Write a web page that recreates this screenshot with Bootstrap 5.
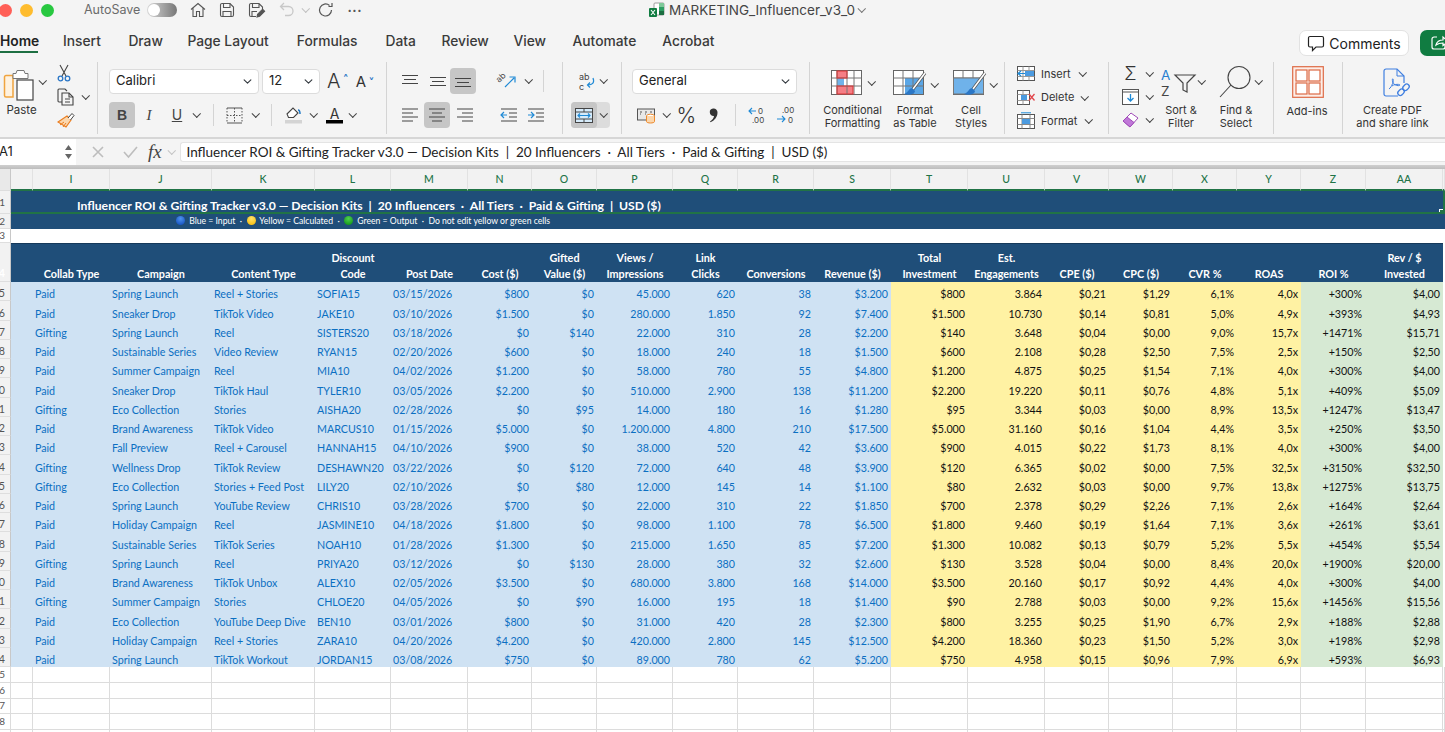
<!DOCTYPE html>
<html lang="en">
<head>
<meta charset="UTF-8">
<meta name="viewport" content="width=device-width, initial-scale=1.0">
<title>MARKETING_Influencer_v3_0</title>
<link href="https://cdn.jsdelivr.net/npm/bootstrap@5.3.0/dist/css/bootstrap.min.css" rel="stylesheet">
<style>
html, body { overflow: hidden; }
body { width: 1445px; height: 732px; background: #fff; font-family: Inter, "Liberation Sans", sans-serif; color: #333; }
svg { display: block; flex: none; overflow: visible; }
svg text { font-family: Inter, "Liberation Sans", sans-serif; }

.chrome { background: #f4f4f4; }
.title-bar { height: 20px; position: relative; }
.light { width: 13px; height: 13px; border-radius: 50%; flex: none; }
.autosave { font-size: 12.5px; color: #6b6b6b; margin-left: 30px; width: 63px; }
.toggle { width: 30px; height: 14px; border-radius: 7px; background: linear-gradient(90deg, #d8d8d8, #777); padding: 1px; flex: none; }
.toggle span { display: block; width: 12px; height: 12px; border-radius: 50%; background: #fff; }
.doc-name { font-size: 13.5px; color: #444; margin-left: 4px; }

.tab-bar { height: 40px; padding-bottom: 2px; }
.tab-item { font-size: 13.8px; color: #3a3a3a; font-weight: 500; height: 33px; padding-top: 11px; line-height: 20px; text-decoration: none; flex: none; }
.tab-item.on { border-bottom: 2.5px solid #1d6f42; color: #222; font-weight: 600; }
.btn-comments { width: 110px; height: 26px; background: #fff; border: 1px solid #e2e2e2; border-radius: 7px; font-size: 14px; color: #222; font-weight: 400; padding: 0; }
.btn-comments:hover { background: #fff; }
.btn-share { width: 25px; height: 26px; background: #107c41; border-radius: 7px 0 0 7px; border: 0; padding: 0 0 0 11px; overflow: hidden; }

.ribbon { height: 77px; }
.rb-group { height: 72px; flex: none; margin-top: 2px; border-right: 1px solid #d4d4d4; position: relative; }
.rb-row { height: 26px; }
.tool-label { font-size: 11px; line-height: 13px; color: #333; text-align: center; white-space: nowrap; }
.tool-name { font-size: 11px; color: #333; }
.chev { display: inline-block; flex: none; width: 5.5px; height: 5.5px; border-right: 1.4px solid #444; border-bottom: 1.4px solid #444; transform: rotate(45deg) translate(-1px,-1px); }
.vsep { width: 1px; height: 22px; background: #d4d4d4; flex: none; }
.btn-tool { width: 26px; height: 26px; padding: 0; border: 0; border-radius: 4px; background: transparent; display: flex; align-items: center; justify-content: center; flex: none; color: #444; font-size: 14px; line-height: 1; }
.btn-tool.on { background: #c6c6c6; }
.rb-select { height: 25px; padding: 0 14px 0 6px; font-size: 13px; color: #222; border: 1px solid #dcdcdc; border-radius: 4px; background-position: right 5px center; background-size: 11px 9px; box-shadow: none; }
.w-font { width: 150px; }
.w-size { width: 58px; }
.w-format { width: 165px; }
.g-clip { width: 98px; }
.g-font { width: 289px; padding: 6px 0 0 11px; }
.g-align { width: 176px; padding: 6px 0 0 11px; }
.g-merge { width: 59px; padding: 6px 0 0 8px; }
.g-num { width: 188px; padding: 6px 0 0 10px; }
.g-styles { width: 195px; padding: 8px 0 0 12px; }
.g-cells { width: 104px; padding: 0 0 0 12px; }
.g-edit { width: 165px; padding: 3px 0 0 13px; }
.g-addin { width: 69px; }
.g-pdf { width: 103px; border-right: 0; }
.cell-cmd { height: 23.5px; }

.formula-bar { height: 28px; border-top: 2px solid #d6d6d6; }
.name-box { width: 77px; height: 26px; background: #fff; font-size: 13px; color: #222; padding-left: 0; flex: none; margin-left: -1px; }
.fx-label { font-family: "Liberation Serif", serif; font-style: italic; font-size: 19px; color: #444; width: 18px; line-height: 20px; }
.formula-text { height: 20px; flex: 1; background: #fff; border: 1px solid #e4e4e4; border-right: 0; border-radius: 3px 0 0 3px; font-family: Lato, "Liberation Sans", sans-serif; font-size: 13.5px; line-height: 18px; color: #222; padding-left: 6px; margin-left: 5px; white-space: nowrap; overflow: hidden; }
.pane-band { height: 4px; background: linear-gradient(#cfcfcf, #bdbdbd); }

.sheet-grid { table-layout: fixed; border-collapse: separate; border-spacing: 0; width: 1445px; font-family: Lato, "Liberation Sans", sans-serif; font-size: 11px; }
.sheet-grid td, .sheet-grid th { padding: 0; overflow: hidden; white-space: nowrap; }
.col-row th { height: 22px; background: #f2f2f2; border-right: 1px solid #e2e2e2; border-bottom: 2px solid #217346; text-align: center; color: #217346; font-size: 10.5px; font-weight: 500; padding-top: 2px; }
.sheet-grid th.col-corner { border-bottom: 1px solid #ddd; border-right: 1px solid #c8c8c8; background: #e9e9e9; }
.row-num { background: #f2f2f2; border-right: 1px solid #c8c8c8; border-bottom: 1px solid #dedede; font-size: 10px; line-height: 11px; color: #555; direction: rtl; padding-right: 6px !important; }
.title-cell { height: 23px; background: #1f4e79; color: #fff; font-weight: 700; font-size: 12.2px; padding-left: 66px !important; vertical-align: bottom; line-height: 12px; border-right: 2px solid #217346; border-bottom: 2px solid #217346; position: relative; }
.sel-handle { position: absolute; right: -1px; bottom: -2px; width: 5px; height: 5px; background: #217346; border: 1px solid #fff; }
.legend-cell { height: 15px; background: #1f4e79; color: #fff; font-size: 8.65px; padding-left: 165px !important; line-height: 14px; vertical-align: top; }
.dot { display: inline-block; width: 9px; height: 9px; border-radius: 50%; margin: 0 2px 0 0; vertical-align: -1px; }
.dot-blue { background: radial-gradient(circle at 50% 30%, #4f93ee, #0a46b8); }
.dot-yellow { background: radial-gradient(circle at 50% 30%, #ffe26a, #f3b800); }
.dot-green { background: radial-gradient(circle at 50% 30%, #4fd04f, #078a0f); }
.gap-row td { height: 14px; background: #fff; }
.head-row td { height: 39px; background: #1f4e79; color: #fff; font-weight: 700; font-size: 10.8px; line-height: 16px; text-align: center; vertical-align: bottom; border-top: 1px solid #16395a; }
.data-row td { height: 19.25px; font-size: 10.7px; line-height: 14px; vertical-align: bottom; }
.c-in { background: #cfe2f3; color: #0b6fc2; }
.c-calc { background: #fff2a3; color: #111; }
.c-out { background: #d6e9d3; color: #111; }
.pad-l { padding-left: 2px !important; }
.pad-r { text-align: right; padding-right: 3px !important; }
.c-out.pad-r.roi { padding-right: 4px !important; }
.empty-row td { height: 15.8px; background: #fff; border-right: 1px solid #dcdcdc; border-bottom: 1px solid #dcdcdc; }
</style>
</head>

<body>

<div class="chrome">
    <!-- window title row -->
    <div class="title-bar d-flex align-items-center">
        <span class="light" style="background:#ff5f57;margin-left:-1px"></span>
        <span class="light ms-2" style="background:#febc2e"></span>
        <span class="light ms-2" style="background:#28c840"></span>
        <span class="autosave">AutoSave</span>
        <span class="toggle"><span></span></span>
        <svg style="margin-left:13px" width="16" height="16" viewBox="0 0 16 16" fill="none" stroke="#555" stroke-width="1.1"><path d="M1 7.5 8 1.5l7 6M3 6v8.5h3.5v-5h3v5H13V6"/></svg>
        <svg style="margin-left:13px" width="16" height="16" viewBox="0 0 16 16" fill="none" stroke="#555" stroke-width="1.1"><path d="M1.5 3a1.5 1.5 0 0 1 1.5-1.500h8l3.500 3.500v8a1.500 1.500 0 0 1-1.500 1.500H3a1.500 1.500 0 0 1-1.500-1.500z"/><path d="M4.500 1.500v4h6.500v-4M4 14.500v-5h8v5"/></svg>
        <svg style="margin-left:13px" width="17" height="16" viewBox="0 0 17 16" fill="none" stroke="#555" stroke-width="1.1"><path d="M8 14.500H3A1.500 1.500 0 0 1 1.500 13V3A1.500 1.500 0 0 1 3 1.500h8L14.500 5v2M4.500 1.500v4H11v-4M4 14.500v-5h5"/><path d="m9 15 .6-2.800 5-5 2 2-5 5z" fill="#555"/></svg>
        <svg style="margin-left:14px" width="16" height="16" viewBox="0 0 16 16" fill="none" stroke="#c8c8c8" stroke-width="1.300"><path d="M5 1 1.500 4.500 5 8M1.500 4.500h8a4.500 4.500 0 0 1 0 9H6"/></svg>
        <span class="chev" style="margin-left:8px;border-color:#c0c0c0"></span>
        <svg style="margin-left:9px" width="16" height="16" viewBox="0 0 16 16" fill="none" stroke="#555" stroke-width="1.200"><path d="M13.500 8a6 6 0 1 1-2-4.500M14 1v3.500h-3.500"/></svg>
        <span style="margin-left:14px;font-size:13px;font-weight:700;letter-spacing:.5px;color:#555;line-height:16px;height:16px">···</span>
        <svg style="margin-left:287px" width="16" height="16" viewBox="0 0 16 16"><rect x="5" y="1" width="10" height="12" rx="1" fill="#fff" stroke="#888" stroke-width=".8"/><rect x="10" y="1" width="5" height="4" fill="#7fc99a"/><rect x="10" y="5" width="5" height="4" fill="#2e9e63"/><rect x="10" y="9" width="5" height="4" fill="#1b6e41"/><rect x="0" y="6" width="8" height="9" rx="1" fill="#107c41"/><path d="m2 8 4 5M6 8l-4 5" stroke="#fff" stroke-width="1.100"/></svg>
        <span class="doc-name">MARKETING_Influencer_v3_0</span>
        <span class="chev ms-1" style="border-color:#777"></span>
    </div>

    <!-- tabs -->
    <div class="tab-bar d-flex align-items-start">
        <a class="tab-item on" style="width:38px">Home</a>
        <a class="tab-item" style="margin-left:25px">Insert</a>
        <a class="tab-item" style="margin-left:27.500px">Draw</a>
        <a class="tab-item" style="margin-left:24.500px">Page Layout</a>
        <a class="tab-item" style="margin-left:28px">Formulas</a>
        <a class="tab-item" style="margin-left:28px">Data</a>
        <a class="tab-item" style="margin-left:25.500px">Review</a>
        <a class="tab-item" style="margin-left:24.700px">View</a>
        <a class="tab-item" style="margin-left:26.500px">Automate</a>
        <a class="tab-item" style="margin-left:26px">Acrobat</a>
        <div class="ms-auto d-flex" style="margin-top:10px;gap:11px">
            <button class="btn btn-comments d-flex align-items-center justify-content-center gap-1">
                <svg width="18" height="17" viewBox="0 0 18 17" fill="none" stroke="#222" stroke-width="1.200"><path d="M3 1.500h12A1.500 1.500 0 0 1 16.500 3v7.500A1.500 1.500 0 0 1 15 12H9l-3.500 3.500V12H3a1.500 1.500 0 0 1-1.500-1.500V3A1.500 1.500 0 0 1 3 1.500z"/></svg>
                Comments
            </button>
            <button class="btn btn-share d-flex align-items-center">
                <svg width="18" height="16" viewBox="0 0 18 16" fill="none" stroke="#fff" stroke-width="1.200"><path d="M6 2H3a2 2 0 0 0-2 2v8a2 2 0 0 0 2 2h9a2 2 0 0 0 2-2v-2M5 10c1-4 4-5 7-5V2l5 4.500-5 4V8c-3 0-5 .5-7 2z"/></svg>
            </button>
        </div>
    </div>

    <!-- ribbon -->
    <div class="ribbon d-flex">
        <!-- clipboard -->
        <div class="rb-group g-clip d-flex">
            <div style="width:37px;margin-left:3px;padding-top:5px">
                <svg width="31" height="33" viewBox="0 0 31 33" fill="none"><path d="M3 8.500h7V30H3a1.500 1.500 0 0 1-1.500-1.500V10A1.500 1.500 0 0 1 3 8.500z" fill="#fff2df" stroke="#f0a43f" stroke-width="1.500"/><path d="M10 6.500h3l1-3h7l1 3h3v5H10z" fill="#fff" stroke="#777"/><rect x="14" y="13" width="16" height="20" fill="#fff" stroke="#444" stroke-width="1.200"/></svg>
                <div class="tool-label" style="margin-top:4px;width:37px;font-size:11.5px">Paste</div>
            </div>
            <span class="chev" style="margin-top:17px"></span>
            <div class="d-flex flex-column align-items-start" style="margin-left:11px;padding-top:2px;gap:6px">
                <svg width="14" height="18" viewBox="0 0 14 18" fill="none"><path d="M3 1 9 12M11 1 5 12" stroke="#444" stroke-width="1.100"/><circle cx="3.500" cy="14.500" r="2.300" stroke="#2a76c6" stroke-width="1.300"/><circle cx="10.500" cy="14.500" r="2.300" stroke="#2a76c6" stroke-width="1.300"/></svg>
                <div class="d-flex align-items-center gap-2">
                    <svg width="18" height="18" viewBox="0 0 18 18" fill="none" stroke="#444" stroke-width="1.100"><path d="M5 14H2a1 1 0 0 1-1-1V2a1 1 0 0 1 1-1h6l2 2"/><path d="M5 5h7l4 4v8H5z" fill="#f4f4f4"/><path d="M12 5v4h4M8 11h5M8 14h5"/></svg>
                    <span class="chev"></span>
                </div>
                <svg width="18" height="17" viewBox="0 0 18 17" fill="none"><path d="M10 4 14 8 9 15 1 10z" fill="#fbd7ae" stroke="#ea7d1f" stroke-width="1.100"/><path d="M3 13l4-3M6 15l3-4" stroke="#ea7d1f"/><path d="m11 6 4-4.500 2 2L13.500 8" fill="#fff" stroke="#444"/></svg>
            </div>
        </div>

        <!-- font -->
        <div class="rb-group g-font">
            <div class="rb-row d-flex align-items-center" style="gap:3px">
                <select class="form-select rb-select w-font"><option>Calibri</option></select>
                <select class="form-select rb-select w-size"><option>12</option></select>
                <span style="margin-left:4px;font-size:20px;line-height:1;font-weight:300;color:#333">A</span><span style="font-size:9px;color:#2a76c6;font-weight:700;margin:-8px 0 0 0">^</span>
                <span style="margin-left:5px;font-size:15px;line-height:1;color:#333">A</span><span style="font-size:9px;color:#2a76c6;font-weight:700;margin:-8px 0 0 0;transform:scaleY(-1)">^</span>
            </div>
            <div class="rb-row d-flex align-items-center" style="margin-top:8px">
                <button class="btn-tool on fw-bold" style="font-family:'Liberation Sans',sans-serif">B</button>
                <button class="btn-tool" style="margin-left:1px;font-family:'Liberation Serif',serif;font-style:italic;font-size:15px">I</button>
                <button class="btn-tool" style="font-size:14px;margin-left:2px;text-decoration:underline">U</button>
                <span class="chev" style="margin-left:4px"></span>
                <span class="vsep" style="margin-left:13px"></span>
                <svg style="margin-left:12px" width="17" height="17" viewBox="0 0 17 17" fill="none" stroke="#555"><path d="M1 1h15M1 16h15" stroke-width="1.200"/><path d="M1 1v15M8.500 1v15M16 1v15M1 8.500h15" stroke-dasharray="1.500 1.500"/></svg>
                <span class="chev" style="margin-left:10px"></span>
                <span class="vsep" style="margin-left:13px"></span>
                <svg style="margin-left:13px" width="17" height="18" viewBox="0 0 17 18" fill="none"><path d="m2 8 6-6 5 5-4.500 4.500h-5z" fill="#fff" stroke="#444" stroke-width="1.100"/><path d="M13 4c1.500 0 2 1.500 2 4" stroke="#1976c6" stroke-width="1.500"/><rect y="14" width="17" height="3.500" fill="#d4d4d4"/></svg>
                <span class="chev" style="margin-left:9px"></span>
                <svg style="margin-left:9px" width="17" height="18" viewBox="0 0 17 18"><text x="8.500" y="12.500" font-size="14" text-anchor="middle" fill="#333">A</text><rect y="14" width="17" height="3.500" fill="#000"/></svg>
                <span class="chev" style="margin-left:7px"></span>
            </div>
        </div>

        <!-- alignment -->
        <div class="rb-group g-align">
            <div class="rb-row d-flex align-items-center">
                <svg style="margin-left:4px" width="16" height="12" viewBox="0 0 16 12" stroke="#444"><path d="M0 .5h16M2 4.500h12M0 8.500h16"/></svg>
                <svg style="margin-left:12px" width="16" height="12" viewBox="0 0 16 12" stroke="#444"><path d="M0 2.500h16M2 6.500h12M0 10.500h16"/></svg>
                <button class="btn-tool on" style="margin-left:4px"><svg width="16" height="12" viewBox="0 0 16 12" stroke="#444"><path d="M0 3.500h16M2 7.500h12M0 11.500h16"/></svg></button>
                <svg style="margin-left:22px" width="18" height="16" viewBox="0 0 18 16" fill="none"><text x="1" y="10" font-size="8.500" fill="#444" transform="rotate(-42 1 10)">ab</text><path d="M7 14 16 5M11.500 4H17v5.500" stroke="#1f8ad6" stroke-width="1.200"/></svg>
                <span class="chev" style="margin-left:10px"></span>
                <span class="vsep" style="margin-left:11px"></span>
            </div>
            <div class="rb-row d-flex align-items-center" style="margin-top:8px">
                <svg style="margin-left:4px" width="16" height="14" viewBox="0 0 16 14" stroke="#444"><path d="M0 1h16M0 5h11M0 9h16M0 13h11"/></svg>
                <button class="btn-tool on" style="margin-left:6px"><svg width="16" height="14" viewBox="0 0 16 14" stroke="#444"><path d="M0 1h16M3 5h10M0 9h16M3 13h10"/></svg></button>
                <svg style="margin-left:7px" width="16" height="14" viewBox="0 0 16 14" stroke="#444"><path d="M0 1h16M5 5h11M0 9h16M5 13h11"/></svg>
                <svg style="margin-left:28px" width="16" height="14" viewBox="0 0 16 14" fill="none"><path d="M0 1h16M8 5h8M8 9h8M0 13h16" stroke="#444"/><path d="M6 7H0M3 4 0 7l3 3" stroke="#1f8ad6" stroke-width="1.200"/></svg>
                <svg style="margin-left:11px" width="16" height="14" viewBox="0 0 16 14" fill="none"><path d="M0 1h16M8 5h8M8 9h8M0 13h16" stroke="#444"/><path d="M0 7h6M3 4l3 3-3 3" stroke="#1f8ad6" stroke-width="1.200"/></svg>
            </div>
        </div>

        <!-- wrap and merge -->
        <div class="rb-group g-merge">
            <div class="rb-row d-flex align-items-center">
                <svg style="margin-left:8px" width="16" height="19" viewBox="0 0 16 19" fill="none"><text x="0" y="8" font-size="9" fill="#444">ab</text><text x="0" y="17.500" font-size="9" fill="#444">c</text><path d="M14 6c2 5-1 7-5 7M11 10.500 8.500 13l2.500 2.500" stroke="#1f8ad6" stroke-width="1.200"/></svg>
                <span class="chev" style="margin-left:6px"></span>
            </div>
            <div class="rb-row d-flex align-items-center" style="margin-top:8px">
                <div class="d-flex align-items-center" style="height:26px;width:39px;background:#dcdcdc;border-radius:4px">
                    <button class="btn-tool on"><svg width="18" height="15" viewBox="0 0 18 15" fill="none"><rect x=".5" y=".5" width="17" height="14" fill="#d6ebfa" stroke="#444"/><path d="M.5 4h17M.5 11h17M9 .5V4M9 11v3.500" stroke="#444"/><path d="M3 7.500h12M5 5.500l-2 2 2 2M13 5.500l2 2-2 2" stroke="#1f8ad6" stroke-width="1.100"/></svg></button>
                    <span class="chev" style="margin-left:4px"></span>
                </div>
            </div>
        </div>

        <!-- number -->
        <div class="rb-group g-num">
            <div class="rb-row d-flex align-items-center">
                <select class="form-select rb-select w-format"><option>General</option></select>
            </div>
            <div class="rb-row d-flex align-items-center" style="margin-top:8px">
                <svg style="margin-left:5px" width="19" height="18" viewBox="0 0 19 18" fill="none"><rect x=".5" y="3" width="17" height="11" fill="#e8e8e8" stroke="#555"/><path d="M3 6h2M3 8h1M8 6h2M8 8h1M13 6h2" stroke="#555"/><ellipse cx="13.500" cy="10" rx="4" ry="1.800" fill="#fff" stroke="#ed8a2e"/><path d="M9.500 10v5.500c0 2 8 2 8 0V10" fill="#fbd7ae" stroke="#ed8a2e"/></svg>
                <span class="chev" style="margin-left:8px"></span>
                <span style="margin-left:7px;font-size:21px;line-height:1;font-weight:300;color:#333;width:22px">%</span>
                <svg style="margin-left:10px" width="9" height="15" viewBox="0 0 9 15" fill="#333"><path d="M4 .5a3.800 3.800 0 0 1 4.500 4c0 4.500-3 8-7 9.800l-.5-.8c2.400-1.500 3.800-3.500 4-5.500C2.700 8.200 .8 6.600 .8 4.300A3.600 3.600 0 0 1 4 .5z"/></svg>
                <span class="vsep" style="margin-left:17px"></span>
                <svg style="margin-left:13px" width="18" height="18" viewBox="0 0 18 18" fill="none"><text x="9" y="8" font-size="8" fill="#444">0</text><text x="3" y="16.500" font-size="8" fill="#444">.00</text><path d="M7 5H0M3 2 0 5l3 3" stroke="#1f8ad6" stroke-width="1.100"/></svg>
                <svg style="margin-left:10px" width="18" height="18" viewBox="0 0 18 18" fill="none"><text x="5" y="7" font-size="8" fill="#444">.00</text><text x="11" y="16.500" font-size="8" fill="#444">0</text><path d="M0 13h8M5 10l3 3-3 3" stroke="#1f8ad6" stroke-width="1.100"/></svg>
            </div>
        </div>

        <!-- styles -->
        <div class="rb-group g-styles d-flex">
            <div style="width:62px">
                <div class="d-flex align-items-center" style="margin-left:9px;gap:7px">
                    <svg width="31" height="25" viewBox="0 0 31 25" fill="none"><rect x=".5" y=".5" width="30" height="24" fill="#fff" stroke="#666"/><rect x="6" y="1" width="10" height="7" fill="#f57e85"/><rect x="6" y="8" width="7" height="8" fill="#6fb2ea"/><rect x="6" y="16" width="16" height="8" fill="#f57e85"/><path d="M6 .5v24M16 .5v24M23 .5v24M.5 8h30M.5 16h30" stroke="#777"/><rect x="6" y="1" width="10" height="7" stroke="#d33"/><rect x="6" y="16" width="16" height="8" stroke="#d33"/></svg>
                    <span class="chev"></span>
                </div>
                <div class="tool-label" style="margin-top:9px;margin-left:-1px">Conditional<br>Formatting</div>
            </div>
            <div style="width:54px;margin-left:7px">
                <div class="d-flex align-items-center" style="margin-left:2px;gap:5px">
                    <svg width="34" height="30" viewBox="0 0 34 30" fill="none"><rect x=".5" y=".5" width="30" height="24" fill="#fff" stroke="#666"/><rect x="12" y="8" width="18" height="16" fill="#5aa6e6"/><path d="M.5 8h30M.5 16h30M10 .5v24M20 .5v24" stroke="#777"/><path d="M32 3 20 19" stroke="#555" stroke-width="3"/><path d="M32 3 20 19" stroke="#fff" stroke-width="1.500"/><path d="M19 18c-3 0-3 4-8 6 5 2 11 0 11-3z" fill="#2a76c6"/></svg>
                    <span class="chev"></span>
                </div>
                <div class="tool-label" style="margin-top:4px;margin-left:-6px">Format<br>as Table</div>
            </div>
            <div style="width:50px;margin-left:6px">
                <div class="d-flex align-items-center" style="margin-left:2px;gap:4px">
                    <svg width="34" height="30" viewBox="0 0 34 30" fill="none"><rect x=".5" y=".5" width="30" height="24" fill="#fff" stroke="#666"/><path d="M.5 8h30M10 .5V8M20 .5V8" stroke="#777"/><path d="M.5 8h30v16H.5z" fill="#6fb2ea" stroke="#777"/><path d="M32 3 20 19" stroke="#555" stroke-width="3"/><path d="M32 3 20 19" stroke="#fff" stroke-width="1.500"/><path d="M19 18c-3 0-3 4-8 6 5 2 11 0 11-3z" fill="#2a76c6"/></svg>
                    <span class="chev"></span>
                </div>
                <div class="tool-label" style="margin-top:4px;margin-left:-10px">Cell<br>Styles</div>
            </div>
        </div>

        <!-- cells -->
        <div class="rb-group g-cells">
            <div class="cell-cmd d-flex align-items-center">
                <svg width="18" height="15" viewBox="0 0 18 15" fill="none"><rect x=".5" y=".5" width="17" height="14" fill="#fff" stroke="#555"/><path d="M.5 4.500h17M.5 10.500h17M6 .5v14M12 .5v14" stroke="#999"/><rect x="8" y="5" width="9" height="5" fill="#4c9be0"/><path d="M8 7.500H1M4 5 1 7.500 4 10" stroke="#1f8ad6" stroke-width="1.200"/></svg>
                <span class="tool-name" style="margin-left:6px">Insert</span><span class="chev" style="margin-left:9px"></span>
            </div>
            <div class="cell-cmd d-flex align-items-center">
                <svg width="18" height="15" viewBox="0 0 18 15" fill="none"><rect x=".5" y=".5" width="12" height="14" fill="#fff" stroke="#555"/><path d="M.5 4.500h12M.5 10.500h12M6 .5v14" stroke="#999"/><rect x="4" y="5" width="6" height="5" fill="#4c9be0"/><path d="m12 4 5.500 6.500M17.500 4 12 10.500" stroke="#e2474c" stroke-width="1.300"/></svg>
                <span class="tool-name" style="margin-left:6px">Delete</span><span class="chev" style="margin-left:8px"></span>
            </div>
            <div class="cell-cmd d-flex align-items-center">
                <svg width="18" height="17" viewBox="0 0 18 17" fill="none"><rect x=".5" y="2.500" width="17" height="14" fill="#fff" stroke="#555"/><path d="M.5 6.500h17M.5 12.500h17M5 2.500v14M13 2.500v14" stroke="#888"/><rect x="5" y="7" width="8" height="5" fill="#4c9be0"/><path d="M4 .8h10" stroke="#1f8ad6"/></svg>
                <span class="tool-name" style="margin-left:6px">Format</span><span class="chev" style="margin-left:9px"></span>
            </div>
        </div>

        <!-- editing -->
        <div class="rb-group g-edit d-flex">
            <div class="d-flex flex-column" style="width:40px;gap:7px">
                <div class="d-flex align-items-center gap-2" style="height:16px;margin-top:1px">
                    <span style="font-size:18px;line-height:1;width:17px;text-align:center;font-weight:300;color:#333">Σ</span><span class="chev"></span>
                </div>
                <div class="d-flex align-items-center gap-2" style="height:16px">
                    <svg width="17" height="16" viewBox="0 0 17 16" fill="none"><rect x=".5" y=".5" width="16" height="15" fill="#fff" stroke="#555"/><path d="M.5 3h16" stroke="#555"/><path d="M8.500 5v7M5.500 9l3 3 3-3" stroke="#1f8ad6" stroke-width="1.300"/></svg><span class="chev"></span>
                </div>
                <div class="d-flex align-items-center gap-2" style="height:16px">
                    <svg width="17" height="16" viewBox="0 0 17 16" fill="none"><path d="m1 9 8-8 7 5-8 9z" fill="#fff" stroke="#a04bb8"/><path d="m1 9 4-4 7 5.500L8 15z" fill="#c078d8" stroke="#a04bb8"/></svg><span class="chev"></span>
                </div>
            </div>
            <div style="width:52px">
                <div class="d-flex align-items-center" style="margin-top:2px;margin-left:-1px">
                    <svg width="35" height="30" viewBox="0 0 35 30" fill="none"><text x="0" y="13" font-size="13.500" fill="#2a7fd0">A</text><text x="0" y="28.500" font-size="13.500" fill="#444">Z</text><path d="M14 8h20l-8 8v9l-4-2v-7z" fill="#f4f4f4" stroke="#444" stroke-width="1.200"/></svg>
                    <span class="chev" style="margin-left:3px"></span>
                </div>
                <div class="tool-label" style="margin-top:7px;margin-left:-1px;width:40px">Sort &amp;<br>Filter</div>
            </div>
            <div style="width:50px;margin-left:5px">
                <div class="d-flex align-items-center" style="gap:5px">
                    <svg width="32" height="33" viewBox="0 0 32 33" fill="none" stroke="#444" stroke-width="1.100"><circle cx="20" cy="12.500" r="11"/><path d="M12 20 1 32"/></svg>
                    <span class="chev"></span>
                </div>
                <div class="tool-label" style="margin-top:6px;margin-left:-4px;width:42px">Find &amp;<br>Select</div>
            </div>
        </div>

        <!-- add-ins -->
        <div class="rb-group g-addin d-flex flex-column align-items-center">
            <svg style="margin-top:4px" width="32" height="32" viewBox="0 0 32 32" fill="#fff" stroke="#dd6a45" stroke-width="1.200"><rect x=".7" y=".7" width="30.600" height="30.600" fill="#fdeee8"/><rect x="4" y="4" width="11" height="11"/><rect x="17" y="4" width="11" height="11"/><rect x="4" y="17" width="11" height="11"/><rect x="17" y="17" width="11" height="11"/></svg>
            <div class="tool-label" style="margin-top:7px;margin-left:-2px">Add-ins</div>
        </div>

        <!-- pdf -->
        <div class="rb-group g-pdf d-flex flex-column align-items-center">
            <svg style="margin:6px 0 0 6px" width="29" height="32" viewBox="0 0 29 32" fill="none"><path d="M15 28H3a2 2 0 0 1-2-2V3a2 2 0 0 1 2-2h11l7 7v7" stroke="#3f7fe0" stroke-width="1.200"/><path d="M14 1v7h7" stroke="#3f7fe0"/><path d="M6 21c3-2 5-9 4-10s-1 3 1 5 6 2 6 1-6-1-8 1" stroke="#3f7fe0"/><rect x="15" y="22" width="7" height="5" rx="2.500" transform="rotate(-45 18 25)" stroke="#3f7fe0" stroke-width="1.300"/><rect x="20" y="17" width="7" height="5" rx="2.500" transform="rotate(-45 23 20)" stroke="#3f7fe0" stroke-width="1.300"/></svg>
            <div class="tool-label" style="margin-top:4px;margin-left:-4px">Create PDF<br>and share link</div>
        </div>
    </div>

    <!-- formula bar -->
    <div class="formula-bar d-flex align-items-center">
        <div class="name-box d-flex align-items-center justify-content-between">
            <span>A1</span>
            <svg style="margin-right:3px" width="9" height="18" viewBox="0 0 9 18" fill="#666"><path d="M4.500 2 8 7H1zM4.500 16 1 11h7z"/></svg>
        </div>
        <svg style="margin-left:16px" width="12" height="12" viewBox="0 0 12 12" stroke="#bdbdbd" stroke-width="1.600"><path d="m1 1 10 10M11 1 1 11"/></svg>
        <svg style="margin-left:19px" width="15" height="12" viewBox="0 0 15 12" fill="none" stroke="#bdbdbd" stroke-width="1.600"><path d="m1 6 4.500 5L14 1"/></svg>
        <span class="fx-label" style="margin-left:10px">fx</span>
        <span class="chev" style="margin-left:3px;border-color:#c4c4c4"></span>
        <div class="formula-text">Influencer ROI &amp; Gifting Tracker v3.0 — Decision Kits &nbsp;|&nbsp; 20 Influencers &nbsp;·&nbsp; All Tiers &nbsp;·&nbsp; Paid &amp; Gifting &nbsp;|&nbsp; USD ($)</div>
    </div>
    <div class="pane-band"></div>
</div>

<table class="sheet-grid">
    <colgroup id="sheetCols"></colgroup>
    <tbody id="sheetBody"></tbody>
</table>

<script>
    const colEdges = [0, 11, 33, 110, 212, 315, 391, 468, 532, 597, 673, 738, 814, 891, 968, 1045, 1109, 1173, 1237, 1301, 1366, 1443, 1445];
    const letters = ['', 'I', 'J', 'K', 'L', 'M', 'N', 'O', 'P', 'Q', 'R', 'S', 'T', 'U', 'V', 'W', 'X', 'Y', 'Z', 'AA'];
    const heads = ['Collab Type', 'Campaign', 'Content Type', 'Discount<br>Code', 'Post Date', 'Cost ($)', 'Gifted<br>Value ($)', 'Views /<br>Impressions', 'Link<br>Clicks', 'Conversions', 'Revenue ($)', 'Total<br>Investment', 'Est.<br>Engagements', 'CPE ($)', 'CPC ($)', 'CVR %', 'ROAS', 'ROI %', 'Rev / $<br>Invested'];
    const rows = [
        'Paid|Spring Launch|Reel + Stories|SOFIA15|03/15/2026|$800|$0|45.000|620|38|$3.200|$800|3.864|$0,21|$1,29|6,1%|4,0x|+300%|$4,00',
        'Paid|Sneaker Drop|TikTok Video|JAKE10|03/10/2026|$1.500|$0|280.000|1.850|92|$7.400|$1.500|10.730|$0,14|$0,81|5,0%|4,9x|+393%|$4,93',
        'Gifting|Spring Launch|Reel|SISTERS20|03/18/2026|$0|$140|22.000|310|28|$2.200|$140|3.648|$0,04|$0,00|9,0%|15,7x|+1471%|$15,71',
        'Paid|Sustainable Series|Video Review|RYAN15|02/20/2026|$600|$0|18.000|240|18|$1.500|$600|2.108|$0,28|$2,50|7,5%|2,5x|+150%|$2,50',
        'Paid|Summer Campaign|Reel|MIA10|04/02/2026|$1.200|$0|58.000|780|55|$4.800|$1.200|4.875|$0,25|$1,54|7,1%|4,0x|+300%|$4,00',
        'Paid|Sneaker Drop|TikTok Haul|TYLER10|03/05/2026|$2.200|$0|510.000|2.900|138|$11.200|$2.200|19.220|$0,11|$0,76|4,8%|5,1x|+409%|$5,09',
        'Gifting|Eco Collection|Stories|AISHA20|02/28/2026|$0|$95|14.000|180|16|$1.280|$95|3.344|$0,03|$0,00|8,9%|13,5x|+1247%|$13,47',
        'Paid|Brand Awareness|TikTok Video|MARCUS10|01/15/2026|$5.000|$0|1.200.000|4.800|210|$17.500|$5.000|31.160|$0,16|$1,04|4,4%|3,5x|+250%|$3,50',
        'Paid|Fall Preview|Reel + Carousel|HANNAH15|04/10/2026|$900|$0|38.000|520|42|$3.600|$900|4.015|$0,22|$1,73|8,1%|4,0x|+300%|$4,00',
        'Gifting|Wellness Drop|TikTok Review|DESHAWN20|03/22/2026|$0|$120|72.000|640|48|$3.900|$120|6.365|$0,02|$0,00|7,5%|32,5x|+3150%|$32,50',
        'Gifting|Eco Collection|Stories + Feed Post|LILY20|02/10/2026|$0|$80|12.000|145|14|$1.100|$80|2.632|$0,03|$0,00|9,7%|13,8x|+1275%|$13,75',
        'Paid|Spring Launch|YouTube Review|CHRIS10|03/28/2026|$700|$0|22.000|310|22|$1.850|$700|2.378|$0,29|$2,26|7,1%|2,6x|+164%|$2,64',
        'Paid|Holiday Campaign|Reel|JASMINE10|04/18/2026|$1.800|$0|98.000|1.100|78|$6.500|$1.800|9.460|$0,19|$1,64|7,1%|3,6x|+261%|$3,61',
        'Paid|Sustainable Series|TikTok Series|NOAH10|01/28/2026|$1.300|$0|215.000|1.650|85|$7.200|$1.300|10.082|$0,13|$0,79|5,2%|5,5x|+454%|$5,54',
        'Gifting|Spring Launch|Reel|PRIYA20|03/12/2026|$0|$130|28.000|380|32|$2.600|$130|3.528|$0,04|$0,00|8,4%|20,0x|+1900%|$20,00',
        'Paid|Brand Awareness|TikTok Unbox|ALEX10|02/05/2026|$3.500|$0|680.000|3.800|168|$14.000|$3.500|20.160|$0,17|$0,92|4,4%|4,0x|+300%|$4,00',
        'Gifting|Summer Campaign|Stories|CHLOE20|04/05/2026|$0|$90|16.000|195|18|$1.400|$90|2.788|$0,03|$0,00|9,2%|15,6x|+1456%|$15,56',
        'Paid|Eco Collection|YouTube Deep Dive|BEN10|03/01/2026|$800|$0|31.000|420|28|$2.300|$800|3.255|$0,25|$1,90|6,7%|2,9x|+188%|$2,88',
        'Paid|Holiday Campaign|Reel + Stories|ZARA10|04/20/2026|$4.200|$0|420.000|2.800|145|$12.500|$4.200|18.360|$0,23|$1,50|5,2%|3,0x|+198%|$2,98',
        'Paid|Spring Launch|TikTok Workout|JORDAN15|03/08/2026|$750|$0|89.000|780|62|$5.200|$750|4.958|$0,15|$0,96|7,9%|6,9x|+593%|$6,93'
    ];

    const cols = document.getElementById('sheetCols');
    for (let i = 1; i < colEdges.length; i++) {
        cols.innerHTML += `<col style="width:${colEdges[i] - colEdges[i - 1]}px">`;
    }

    function cellClass(i) {
        if (i < 5) return 'c-in pad-l';
        if (i < 11) return 'c-in pad-r';
        if (i < 17) return 'c-calc pad-r';
        return i === 17 ? 'c-out pad-r roi' : 'c-out pad-r';
    }

    let html = '<tr class="col-row"><th class="col-corner"></th>';
    letters.forEach(l => { html += `<th>${l}</th>`; });
    html += '<th></th></tr>';

    html += '<tr><td class="row-num">1</td><td class="title-cell" colspan="21">Influencer ROI &amp; Gifting Tracker v3.0 — Decision Kits &nbsp;|&nbsp; 20 Influencers &nbsp;·&nbsp; All Tiers &nbsp;·&nbsp; Paid &amp; Gifting &nbsp;|&nbsp; USD ($)<span class="sel-handle"></span></td></tr>';
    html += '<tr><td class="row-num">2</td><td class="legend-cell" colspan="21"><span class="dot dot-blue"></span> Blue = Input &nbsp;·&nbsp; <span class="dot dot-yellow"></span> Yellow = Calculated &nbsp;·&nbsp; <span class="dot dot-green"></span> Green = Output &nbsp;·&nbsp; Do not edit yellow or green cells</td></tr>';
    html += '<tr class="gap-row"><td class="row-num">3</td><td colspan="21"></td></tr>';

    html += '<tr class="head-row"><td class="row-num" style="background:#f2f2f2;border-top:0">4</td><td></td>';
    heads.forEach(h => { html += `<td>${h}</td>`; });
    html += '<td style="background:#fff;border:0"></td></tr>';

    rows.forEach((r, n) => {
        html += `<tr class="data-row"><td class="row-num">${n + 5}</td><td class="c-in"></td>`;
        r.split('|').forEach((v, i) => { html += `<td class="${cellClass(i)}">${v}</td>`; });
        html += '<td></td></tr>';
    });

    for (let n = 25; n < 30; n++) {
        html += `<tr class="empty-row"><td class="row-num">${n}</td>`;
        for (let c = 0; c < 21; c++) html += '<td></td>';
        html += '</tr>';
    }
    document.getElementById('sheetBody').innerHTML = html;
</script>

<script src="https://cdn.jsdelivr.net/npm/bootstrap@5.3.0/dist/js/bootstrap.bundle.min.js"></script>
</body>
</html>
